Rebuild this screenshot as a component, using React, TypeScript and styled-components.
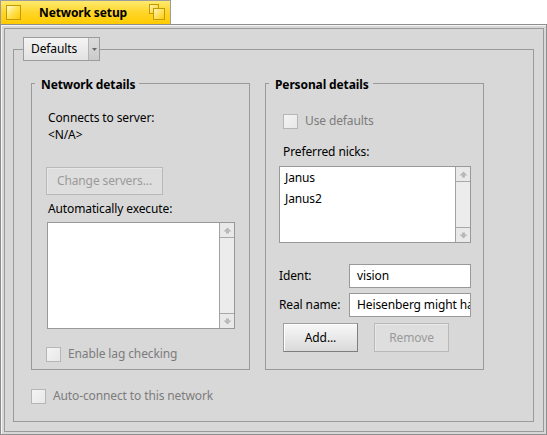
import styled, { createGlobalStyle } from 'styled-components';

const GlobalStyle = createGlobalStyle`
  html, body {
    margin: 0;
    padding: 0;
    background: #ffffff;
  }
  body {
    font-family: "Noto Sans", "DejaVu Sans", sans-serif;
    font-size: 12px;
    line-height: 16px;
    letter-spacing: -0.12px;
    color: #000000;
  }
  * {
    box-sizing: border-box;
  }
`;

const Window = styled.div`
  width: 547px;
  height: 435px;
  display: flex;
  flex-direction: column;
`;

const Tab = styled.div`
  width: 171px;
  height: 24px;
  flex: none;
  display: flex;
  align-items: center;
  padding: 0 4px 0 5px;
  border: 1px solid #9c9c9c;
  border-bottom: none;
  background: linear-gradient(180deg, #ffea70 0%, #ffd529 50%, #ffcb00 100%);
`;

const CloseBox = styled.div`
  width: 15px;
  height: 15px;
  border: 1px solid #c29b00;
  background: linear-gradient(135deg, #fffbe0 0%, #ffe45a 45%, #ffcb00 100%);
`;

const Title = styled.div`
  flex: 1;
  margin-left: 18px;
  font-weight: 700;
  white-space: nowrap;
`;

const Frame = styled.div`
  flex: 1;
  display: flex;
  border: 1px solid #8e8e8e;
  background: #d8d8d8;
  padding: 3px 2px 2px 3px;
  box-shadow: inset 1px 1px 0 #f4f4f4;
`;

const Panel = styled.div`
  flex: 1;
  display: flex;
  border: 1px solid #9a9a9a;
  padding: 8px 9px 9px 8px;
`;

const Group = styled.fieldset<{ $width?: number }>`
  margin: 0;
  padding: 0;
  min-width: 0;
  border: 1px solid #9a9a9a;
  display: flex;
  flex-direction: column;
  ${(p) => (p.$width ? `width: ${p.$width}px; flex: none;` : 'flex: 1;')}
`;

const MenuLegend = styled.legend`
  margin-left: 9px;
  padding: 0;
  float: none;
`;

const BoxLegend = styled.legend`
  margin-left: 3px;
  padding: 2px 4px 0 6px;
  font-weight: 700;
  line-height: 15px;
`;

const MenuField = styled.div`
  width: 77px;
  height: 24px;
  display: flex;
  border: 1px solid #9c9c9c;
  background: linear-gradient(180deg, #f4f4f4 0%, #e2e2e2 100%);
`;

const MenuLabel = styled.div`
  flex: 1;
  padding-left: 7px;
  line-height: 22px;
`;

const MenuArrow = styled.div`
  width: 11px;
  display: flex;
  align-items: center;
  justify-content: center;
  border-left: 1px solid #b4b4b4;
  background: linear-gradient(180deg, #dcdcdc 0%, #cbcbcb 100%);
`;

const MainBody = styled.div`
  flex: 1;
  display: flex;
  flex-direction: column;
  padding: 14px 0 0 17px;
`;

const BoxRow = styled.div`
  display: flex;
  gap: 15px;
  align-items: stretch;
`;

const BoxBody = styled.div<{ $pad: string }>`
  flex: 1;
  display: flex;
  flex-direction: column;
  align-items: flex-start;
  padding: ${(p) => p.$pad};
`;

const InfoText = styled.div`
  margin-left: 2px;
  line-height: 17px;
`;

const Label = styled.div<{ $top: number; $left?: number }>`
  margin-top: ${(p) => p.$top}px;
  margin-left: ${(p) => p.$left ?? 0}px;
  white-space: nowrap;
`;

const Button = styled.button<{ $width: number; $height: number; $top?: number }>`
  width: ${(p) => p.$width}px;
  height: ${(p) => p.$height}px;
  margin: ${(p) => p.$top ?? 0}px 0 0 0;
  padding: 0;
  font-family: inherit;
  font-size: 12px;
  line-height: 16px;
  letter-spacing: inherit;
  color: #000000;
  border: 1px solid #8c8c8c;
  border-color: #a0a0a0 #7e7e7e #7e7e7e #a0a0a0;
  border-radius: 0;
  background: linear-gradient(180deg, #f8f8f8 0%, #e6e6e6 60%, #d9d9d9 100%);
  box-shadow: inset 1px 1px 0 #ffffff;

  &:disabled {
    color: #9a9a9a;
    border-color: #b9b9b9;
    background: #dedede;
    box-shadow: inset 1px 1px 0 #e8e8e8;
  }
`;

const ScrollBox = styled.div<{ $width: number; $height: number; $top: number; $left?: number }>`
  width: ${(p) => p.$width}px;
  height: ${(p) => p.$height}px;
  margin-top: ${(p) => p.$top}px;
  margin-left: ${(p) => p.$left ?? 0}px;
  display: flex;
  border: 1px solid #999999;
  background: #ffffff;
`;

const ListArea = styled.div`
  flex: 1;
  padding-left: 5px;
`;

const ListItem = styled.div`
  height: 21px;
  line-height: 21px;
  white-space: nowrap;
`;

const ScrollBar = styled.div`
  width: 15px;
  display: flex;
  flex-direction: column;
  border-left: 1px solid #a2a2a2;
  background: #ececec;
`;

const ScrollArrow = styled.div<{ $down?: boolean }>`
  height: 15px;
  flex: none;
  display: flex;
  align-items: center;
  justify-content: center;
  background: #e9e9e9;
  ${(p) => (p.$down ? 'border-top: 1px solid #a8a8a8;' : 'border-bottom: 1px solid #a8a8a8;')}
`;

const Track = styled.div`
  flex: 1;
`;

const CheckRow = styled.div<{ $top: number; $left?: number }>`
  display: flex;
  align-items: center;
  gap: 7px;
  margin-top: ${(p) => p.$top}px;
  margin-left: ${(p) => p.$left ?? 0}px;
  color: #7c7c7c;
  white-space: nowrap;
`;

const CheckBox = styled.div`
  width: 15px;
  height: 15px;
  flex: none;
  border: 1px solid #b6b6b6;
  background: linear-gradient(135deg, #f4f4f4 0%, #e8e8e8 100%);
`;

const FormRow = styled.div<{ $top: number }>`
  width: 100%;
  display: flex;
  align-items: center;
  margin-top: ${(p) => p.$top}px;
`;

const FormLabel = styled.div`
  width: 70px;
  flex: none;
  white-space: nowrap;
`;

const TextField = styled.div`
  flex: 1;
  height: 24px;
  min-width: 0;
  padding-left: 7px;
  line-height: 22px;
  overflow: hidden;
  white-space: nowrap;
  border: 1px solid #999999;
  background: #ffffff;
`;

const ButtonRow = styled.div`
  display: flex;
  gap: 16px;
  margin: 6px 0 0 4px;
`;

function Arrow({ down }: { down?: boolean }) {
  return (
    <svg width="9" height="7" viewBox="0 0 9 7">
      <path
        d={down ? 'M4.5 6.5 L0.5 2.5 L3 2.5 L3 0.5 L6 0.5 L6 2.5 L8.5 2.5 Z' : 'M4.5 0.5 L8.5 4.5 L6 4.5 L6 6.5 L3 6.5 L3 4.5 L0.5 4.5 Z'}
        fill="#b8b8b8"
      />
    </svg>
  );
}

function ScrollColumn() {
  return (
    <ScrollBar>
      <ScrollArrow>
        <Arrow />
      </ScrollArrow>
      <Track />
      <ScrollArrow $down>
        <Arrow down />
      </ScrollArrow>
    </ScrollBar>
  );
}

function Check({ label, top, left }: { label: string; top: number; left?: number }) {
  return (
    <CheckRow $top={top} $left={left}>
      <CheckBox />
      {label}
    </CheckRow>
  );
}

export default function App() {
  return (
    <>
      <GlobalStyle />
      <Window>
        <Tab>
          <CloseBox />
          <Title>Network setup</Title>
          <svg width="17" height="17" viewBox="0 0 17 17">
            <defs>
              <linearGradient id="zg" x1="0" y1="0" x2="1" y2="1">
                <stop offset="0" stopColor="#fff6c0" />
                <stop offset="1" stopColor="#ffcb00" />
              </linearGradient>
            </defs>
            <rect x="0.5" y="0.5" width="9" height="9" fill="url(#zg)" stroke="#c29b00" />
            <rect x="4.5" y="4.5" width="11" height="11" fill="url(#zg)" stroke="#c29b00" />
          </svg>
        </Tab>
        <Frame>
          <Panel>
            <Group>
              <MenuLegend>
                <MenuField>
                  <MenuLabel>Defaults</MenuLabel>
                  <MenuArrow>
                    <svg width="5" height="3" viewBox="0 0 5 3">
                      <path d="M0 0 L5 0 L2.5 3 Z" fill="#6a6a6a" />
                    </svg>
                  </MenuArrow>
                </MenuField>
              </MenuLegend>
              <MainBody>
                <BoxRow>
                  <Group $width={219}>
                    <BoxLegend>Network details</BoxLegend>
                    <BoxBody $pad="17px 14px 7px 14px">
                      <InfoText>
                        Connects to server:
                        <br />
                        &lt;N/A&gt;
                      </InfoText>
                      <Button disabled $width={117} $height={28} $top={24}>
                        Change servers...
                      </Button>
                      <Label $top={6} $left={2}>
                        Automatically execute:
                      </Label>
                      <ScrollBox $width={188} $height={107} $top={5} $left={1}>
                        <ListArea />
                        <ScrollColumn />
                      </ScrollBox>
                      <Check label="Enable lag checking" top={17} />
                    </BoxBody>
                  </Group>
                  <Group $width={219}>
                    <BoxLegend>Personal details</BoxLegend>
                    <BoxBody $pad="21px 12px 0 13px">
                      <Check label="Use defaults" top={0} left={4} />
                      <Label $top={15} $left={4}>
                        Preferred nicks:
                      </Label>
                      <ScrollBox $width={192} $height={77} $top={6}>
                        <ListArea>
                          <ListItem>Janus</ListItem>
                          <ListItem>Janus2</ListItem>
                        </ListArea>
                        <ScrollColumn />
                      </ScrollBox>
                      <FormRow $top={21}>
                        <FormLabel>Ident:</FormLabel>
                        <TextField>vision</TextField>
                      </FormRow>
                      <FormRow $top={5}>
                        <FormLabel>Real name:</FormLabel>
                        <TextField>Heisenberg might have been here</TextField>
                      </FormRow>
                      <ButtonRow>
                        <Button $width={75} $height={29}>
                          Add...
                        </Button>
                        <Button disabled $width={75} $height={29}>
                          Remove
                        </Button>
                      </ButtonRow>
                    </BoxBody>
                  </Group>
                </BoxRow>
                <Check label="Auto-connect to this network" top={18} />
              </MainBody>
            </Group>
          </Panel>
        </Frame>
      </Window>
    </>
  );
}
